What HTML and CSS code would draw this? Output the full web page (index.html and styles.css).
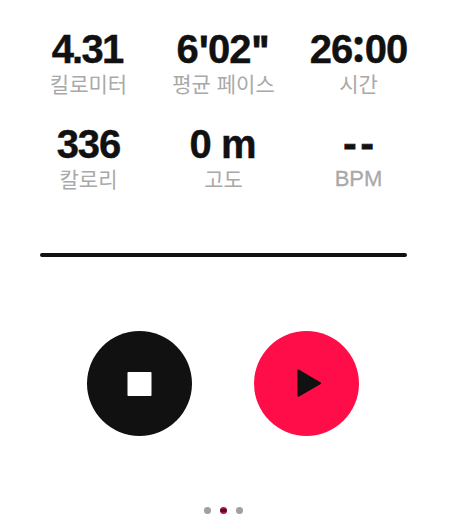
FILE: index.html
```html
<!DOCTYPE html>
<html lang="ko">
<head>
<meta charset="utf-8">
<title>러닝</title>
<link rel="stylesheet" href="styles.css">
</head>
<body>
<main class="run">
  <section class="stats">
    <div class="stat"><div class="value distance">4.31</div><div class="label">킬로미터</div></div>
    <div class="stat"><div class="value pace">6<span class="quote">'</span>02<span class="quote">"</span></div><div class="label">평균 페이스</div></div>
    <div class="stat"><div class="value">26<span class="colon">:</span>00</div><div class="label">시간</div></div>
    <div class="stat"><div class="value">336</div><div class="label">칼로리</div></div>
    <div class="stat"><div class="value altitude">0 m</div><div class="label">고도</div></div>
    <div class="stat"><div class="value dashes">--</div><div class="label latin">BPM</div></div>
  </section>
  <div class="divider"></div>
  <div class="controls">
    <button class="control stop" aria-label="정지"><svg viewBox="0 0 105 105"><rect x="40.500" y="41" width="24" height="24" rx="0.700" fill="#fff"/></svg></button>
    <button class="control play" aria-label="재생"><svg viewBox="0 0 105 105"><path d="M44.300 39.300 66.300 52.200 44.300 64.900Z" fill="#111" stroke="#111" stroke-width="1.800" stroke-linejoin="round"/></svg></button>
  </div>
  <div class="pager"><i class="dot"></i><i class="dot active"></i><i class="dot"></i></div>
</main>
</body>
</html>
```
FILE: styles.css
```css
* { box-sizing: border-box; }
body { margin: 0; background: #fff; overflow: hidden; }
.run {
  width: 451px;
  height: 518px;
  padding-top: 26px;
  font-family: "Liberation Sans", "Noto Sans CJK KR", sans-serif;
}
.stats {
  display: grid;
  grid-template-columns: repeat(3, 135px);
  grid-auto-rows: 95px;
  margin-left: 21px;
}
.stat { text-align: center; white-space: nowrap; }
.value {
  height: 45px;
  line-height: 46px;
  font-size: 40px;
  font-weight: 700;
  letter-spacing: -1px;
  color: #111;
  -webkit-text-stroke: 0.4px #111;
}
.distance { letter-spacing: -1.800px; padding-right: 3px; }
.pace { padding-right: 2px; }
.altitude { padding-right: 2px; }
.quote { font-family: Inter, sans-serif; font-size: 36px; line-height: 0; letter-spacing: -2px; position: relative; top: -1px; -webkit-text-stroke: 1px #111; }
.colon { font-family: "Open Sans", sans-serif; font-size: 44px; line-height: 0; position: relative; top: -1px; letter-spacing: 0; }
.dashes { letter-spacing: 4px; padding-left: 4px; line-height: 45px; -webkit-text-stroke: 0.8px #111; }
.label {
  height: 24px;
  line-height: 24px;
  font-size: 21px;
  color: #a9a9a9;
  font-family: "Noto Sans CJK KR", sans-serif;
}
.latin { font-family: "Liberation Sans", sans-serif; font-size: 22px; line-height: 26px; -webkit-text-stroke: 0.3px #a9a9a9; }
.divider { width: 367px; height: 4px; margin: 37px 0 0 40px; border-radius: 2px; background: #111; }
.controls { display: flex; gap: 62.500px; margin: 74px 0 0 86.700px; }
.control { width: 105px; height: 105px; padding: 0; border: 0; border-radius: 50%; }
.control svg { display: block; width: 105px; height: 105px; }
.stop { background: #111; }
.play { background: #ff0d48; }
.pager { display: flex; gap: 9px; margin: 71px 0 0 204px; }
.dot { width: 7px; height: 7px; border-radius: 50%; background: #a0a0a0; }
.active { background: linear-gradient(#a51b3c 2px, #5c0c1e 2px, #5c0c1e 5px, #a51b3c 5px); }
```
